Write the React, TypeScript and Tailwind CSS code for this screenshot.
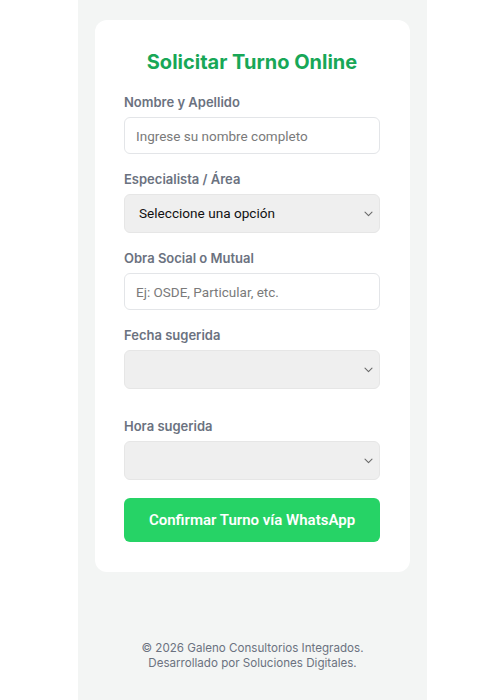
import React from "react";

function Chevron() {
  return (
    <svg
      className="pointer-events-none absolute right-[7px] top-1/2 -translate-y-1/2"
      width="9"
      height="6"
      viewBox="0 0 9 6"
      fill="none"
    >
      <path d="M1 1.2 4.5 4.6 8 1.2" stroke="#6b6b6b" strokeWidth="1.1" strokeLinecap="round" strokeLinejoin="round" />
    </svg>
  );
}

function Label({ children }: { children: React.ReactNode }) {
  return (
    <label className="block text-[13px] leading-[18px] font-semibold text-[#6b7280] mb-[6px]">
      {children}
    </label>
  );
}

function TextInput({ placeholder }: { placeholder: string }) {
  return (
    <input
      type="text"
      placeholder={placeholder}
      className="block w-full h-[37px] rounded-[6px] border border-[#e3e5e8] bg-white px-[11px] text-[13.5px] text-[#333] placeholder:text-[#7a7a7a] outline-none [font-family:Roboto,sans-serif]"
    />
  );
}

function Select({ text }: { text?: string }) {
  return (
    <div className="relative">
      <div className="flex items-center w-full h-[39px] rounded-[6px] border border-[#e6e6e6] bg-[#efefef] px-[14px] text-[13.6px] text-[#111] [font-family:Roboto,sans-serif]">
        {text}
      </div>
      <Chevron />
    </div>
  );
}

export default function App() {
  return (
    <div className="min-h-[700px] bg-white [font-family:Inter,sans-serif]">
      <div className="ml-[78px] w-[349px] min-h-[700px] bg-[#f3f5f4] px-[17px] pt-[20px] flex flex-col">
        <div className="bg-white rounded-[12px] pl-[29px] pr-[30px] pt-[28px] pb-[30px]">
          <h1 className="text-center text-[20px] leading-[28px] font-bold text-[#18a757] mb-[17px]">
            Solicitar Turno Online
          </h1>
          <Label>Nombre y Apellido</Label>
          <TextInput placeholder="Ingrese su nombre completo" />
          <div className="h-[16px]" />
          <Label>Especialista / Área</Label>
          <Select text="Seleccione una opción" />
          <div className="h-[16px]" />
          <Label>Obra Social o Mutual</Label>
          <TextInput placeholder="Ej: OSDE, Particular, etc." />
          <div className="h-[16px]" />
          <Label>Fecha sugerida</Label>
          <Select />
          <div className="h-[28px]" />
          <Label>Hora sugerida</Label>
          <Select />
          <button className="mt-[18px] block w-full h-[44px] rounded-[6px] bg-[#26d366] text-white text-[15px] font-semibold [font-family:Roboto,sans-serif]">
            Confirmar Turno vía WhatsApp
          </button>
        </div>
        <div className="mt-[69px] text-center text-[11.6px] leading-[14.5px] text-[#6b7280]">
          <p>© 2026 Galeno Consultorios Integrados.</p>
          <p>Desarrollado por Soluciones Digitales.</p>
        </div>
      </div>
    </div>
  );
}
